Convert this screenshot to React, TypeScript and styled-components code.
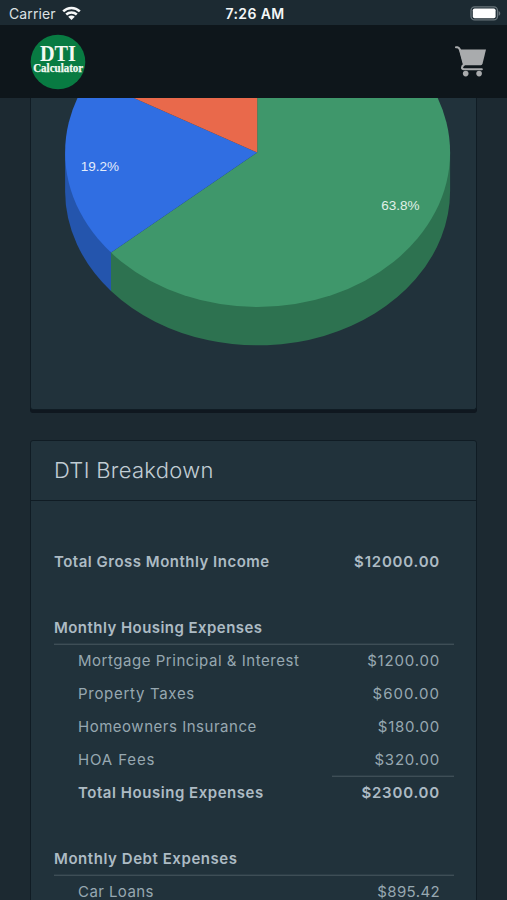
import React from "react";
import styled, { createGlobalStyle } from "styled-components";

const GlobalStyle = createGlobalStyle`
  * { box-sizing: border-box; }
  body { margin: 0; background: #1c2931; }
`;

const Screen = styled.div`
  width: 507px;
  height: 900px;
  overflow: hidden;
  display: flex;
  flex-direction: column;
  background: #1c2931;
  color: #adbbc4;
  font-family: Inter, "Liberation Sans", sans-serif;
`;

const StatusBar = styled.div`
  flex: none;
  height: 25px;
  padding: 2px 6px 0 9px;
  display: grid;
  grid-template-columns: 1fr auto 1fr;
  align-items: center;
  background: #1c2a32;
  color: #f4f6f7;
  line-height: 18px;
`;

const Carrier = styled.div`
  display: flex;
  align-items: center;
  gap: 6px;
  font-size: 14px;
  letter-spacing: 0.1px;
  color: #dce1e3;
`;

const Clock = styled.div`
  font-size: 14px;
  font-weight: 600;
  letter-spacing: 0.4px;
`;

const BatterySlot = styled.div`
  display: flex;
  justify-content: flex-end;
`;

const Header = styled.header`
  flex: none;
  height: 73px;
  padding: 1px 20px 0 30px;
  display: flex;
  align-items: center;
  justify-content: space-between;
  background: #0e161b;
`;

const Content = styled.main`
  flex: 1;
  min-height: 0;
  overflow: hidden;
  padding: 0 30px;
`;

const ChartCard = styled.section`
  height: 312px;
  border: 1px solid #101c24;
  border-top: 0;
  border-radius: 0 0 3px 3px;
  box-shadow: 0 3px 0 #0f171f;
  background: #21323b;

  svg { display: block; }
`;

const Card = styled.section`
  margin-top: 30px;
  height: 500px;
  border: 1px solid #101c24;
  border-radius: 3px;
  background: #21323b;
`;

const CardTitle = styled.h2`
  margin: 0;
  height: 60px;
  padding: 0 23px;
  border-bottom: 1px solid #101c24;
  font-size: 22px;
  font-weight: 300;
  line-height: 58px;
  letter-spacing: 0.3px;
  color: #c1cdd4;
`;

const Table = styled.div`
  padding: 44px 22px 0 23px;
`;

const Row = styled.div<{ $kind: Kind }>`
  height: 33px;
  display: flex;
  justify-content: space-between;
  line-height: 33px;
  font-size: 15px;
  white-space: nowrap;
  font-weight: ${(p) => (p.$kind === "item" ? 400 : 600)};
  color: ${(p) => (p.$kind === "item" ? "#97a8b1" : "#adbbc4")};
  padding-left: ${(p) => (p.$kind === "item" || p.$kind === "total" ? 24 : 0)}px;
  box-shadow: ${(p) => (p.$kind === "heading" ? "0 1px 0 #3e4e56, inset 0 -1px 0 #2c3d46" : "none")};
`;

const Label = styled.span<{ $track: number }>`
  letter-spacing: ${(p) => p.$track}px;
`;

const Amount = styled.span<{ $track: number; $ruled: boolean }>`
  width: 122px;
  padding-right: 14px;
  text-align: right;
  letter-spacing: ${(p) => p.$track}px;
  box-shadow: ${(p) => (p.$ruled ? "0 -1px 0 #2c3d46, inset 0 1px 0 #3e4e56" : "none")};
`;

const Gap = styled.div`
  height: 33px;
`;

type Kind = "summary" | "heading" | "item" | "total";

interface Line {
  kind: Kind;
  label: string;
  amount?: string;
  track: number;
  amountTrack?: number;
}

const groups: Line[][] = [
  [{ kind: "summary", label: "Total Gross Monthly Income", amount: "$12000.00", track: 0.5, amountTrack: 0.78 }],
  [
    { kind: "heading", label: "Monthly Housing Expenses", track: 0.45 },
    { kind: "item", label: "Mortgage Principal & Interest", amount: "$1200.00", track: 0.53, amountTrack: 0.82 },
    { kind: "item", label: "Property Taxes", amount: "$600.00", track: 0.7, amountTrack: 1.02 },
    { kind: "item", label: "Homeowners Insurance", amount: "$180.00", track: 0.52, amountTrack: 0.75 },
    { kind: "item", label: "HOA Fees", amount: "$320.00", track: 0.88, amountTrack: 0.8 },
    { kind: "total", label: "Total Housing Expenses", amount: "$2300.00", track: 0.54, amountTrack: 0.8 },
  ],
  [
    { kind: "heading", label: "Monthly Debt Expenses", track: 0.56 },
    { kind: "item", label: "Car Loans", amount: "$895.42", track: 0.42, amountTrack: 0.38 },
  ],
];

const Wifi = () => (
  <svg width="19" height="15" viewBox="0 0 19 15" fill="none" stroke="#f6f8f8" strokeWidth="2.5">
    <path d="M1.2 5.4 C5.8 0.8 13.2 0.8 17.8 5.4" />
    <path d="M4.2 8.5 C7.2 5.7 11.8 5.7 14.8 8.5" />
    <path d="M9.5 14 L6.2 10.8 C8.2 9.1 10.8 9.1 12.8 10.8 Z" fill="#f6f8f8" stroke="none" />
  </svg>
);

const Battery = () => (
  <svg width="31" height="15" viewBox="0 0 31 15">
    <rect x="1" y="0.9" width="26.5" height="13" rx="3.6" fill="#1c2a32" stroke="#68747a" strokeWidth="1.3" />
    <rect x="2.8" y="2.5" width="22.8" height="9.8" rx="1.8" fill="#fff" />
    <path d="M28.6 5 C30.8 5.8 30.8 9 28.6 9.8 Z" fill="#68747a" />
  </svg>
);

const Logo = () => (
  <svg width="56" height="56" viewBox="0 0 56 56">
    <circle cx="28" cy="28" r="27.3" fill="#087b42" />
    <g fill="#f3faf2" fontFamily="'Liberation Serif', serif" fontWeight="700" textAnchor="middle">
      <text x="28" y="26.8" fontSize="23.5" textLength="36" lengthAdjust="spacingAndGlyphs">DTI</text>
      <text x="28.2" y="38.3" fontSize="12" textLength="50" lengthAdjust="spacingAndGlyphs" stroke="#f3faf2" strokeWidth="0.25">Calculator</text>
    </g>
  </svg>
);

const Cart = () => (
  <svg width="33" height="32" viewBox="0 0 33 32" fill="none">
    <path d="M2 1.3 H3.4 Q5.4 1.6 6.2 4.6 L10 18.6 Q8 20 8 21.8 Q8 23.2 10 23.2 H27.8" stroke="#a9abad" strokeWidth="2.1" strokeLinecap="round" strokeLinejoin="round" />
    <path d="M5.2 3.6 H32 L28.6 17.6 Q28.2 19.2 26.8 19.2 H9.6 Z" fill="#a9abad" />
    <circle cx="11.7" cy="27.6" r="2.8" fill="#a9abad" />
    <circle cx="25.1" cy="27.6" r="2.8" fill="#a9abad" />
  </svg>
);

const PieChart = () => (
  <svg width="445" height="311" viewBox="31 98 445 311">
    <clipPath id="pie-face">
      <ellipse cx="257.6" cy="152.5" rx="192.5" ry="154.5" />
    </clipPath>
    <path d="M65.1 152.5 V191 A192.5 154.5 0 0 0 111 291 V252.5 Z" fill="#2455ad" />
    <path d="M111 252.5 V291 A192.5 154.5 0 0 0 450.1 191 V152.5 Z" fill="#2d7250" />
    <g clipPath="url(#pie-face)">
      <path d="M257.2 152.5 V-10 H460 V320 H12.6 Z" fill="#3f976b" />
      <path d="M257.2 152.5 L12.6 320 H0 V38.8 Z" fill="#306ee2" />
      <path d="M257.2 152.5 L0 38.8 V-10 H257.2 Z" fill="#e9694b" />
    </g>
    <g fontFamily="'Liberation Sans', sans-serif" fontSize="13.5" textAnchor="middle">
      <text x="99.9" y="171" fill="#e3ecfb">19.2%</text>
      <text x="400.4" y="210" fill="#e0f1e8">63.8%</text>
    </g>
  </svg>
);

export default function App() {
  return (
    <>
      <GlobalStyle />
      <Screen>
        <StatusBar>
          <Carrier>Carrier <Wifi /></Carrier>
          <Clock>7:26 AM</Clock>
          <BatterySlot><Battery /></BatterySlot>
        </StatusBar>
        <Header>
          <Logo />
          <Cart />
        </Header>
        <Content>
          <ChartCard><PieChart /></ChartCard>
          <Card>
            <CardTitle>DTI Breakdown</CardTitle>
            <Table>
              {groups.map((lines, g) => (
                <React.Fragment key={g}>
                  {g > 0 && <Gap />}
                  {lines.map((line) => (
                    <Row key={line.label} $kind={line.kind}>
                      <Label $track={line.track}>{line.label}</Label>
                      {line.amount && (
                        <Amount $track={line.amountTrack ?? 0} $ruled={line.kind === "total"}>
                          {line.amount}
                        </Amount>
                      )}
                    </Row>
                  ))}
                </React.Fragment>
              ))}
            </Table>
          </Card>
        </Content>
      </Screen>
    </>
  );
}
